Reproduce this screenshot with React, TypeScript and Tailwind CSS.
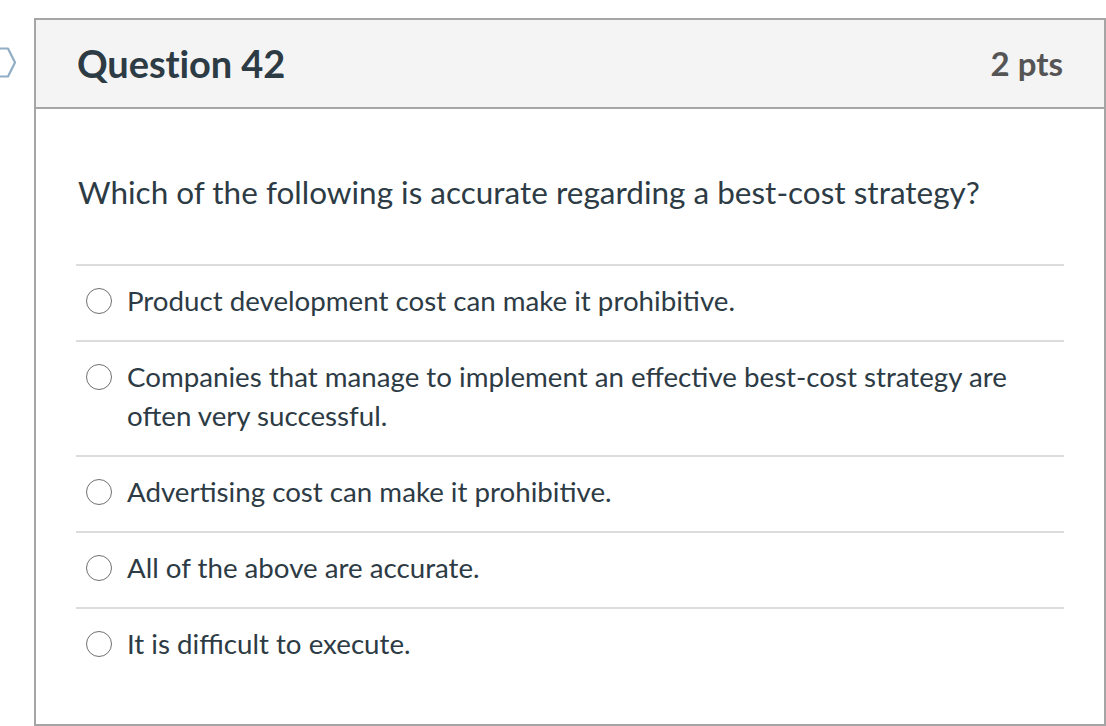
import React from "react";

const options = [
  "Product development cost can make it prohibitive.",
  "Companies that manage to implement an effective best-cost strategy are often very successful.",
  "Advertising cost can make it prohibitive.",
  "All of the above are accurate.",
  "It is difficult to execute.",
];

export default function App() {
  return (
    <div className="relative w-[1106px] h-[726px] bg-white overflow-hidden" style={{ fontFamily: "Lato, 'Noto Sans', sans-serif" }}>
      <svg className="absolute left-0 top-[46px]" width="20" height="34" viewBox="0 0 20 34">
        <path d="M-4 2.5 H8 L15 16.5 L8 30.5 H-4" fill="none" stroke="#8fadc4" strokeWidth="2.2" strokeLinejoin="round" />
      </svg>
      <div className="ml-[34px] mt-[18px] w-[1072px] h-[708px] border-2 border-[#a5a5a5] flex flex-col">
        <div className="h-[89px] bg-[#f4f4f4] border-b-2 border-[#a5a5a5] flex items-center justify-between pl-[41px] pr-[41px] shrink-0">
          <span className="text-[38px] font-bold text-[#2d3b45] tracking-[-0.1px]">Question 42</span>
          <span className="text-[33px] font-bold text-[#555555]">2 pts</span>
        </div>
        <div className="px-[40px] pt-[61px]">
          <p className="text-[31.5px] leading-[44px] text-[#2d3b45] pl-[2px] mb-[50px]">Which of the following is accurate regarding a best-cost strategy?</p>
          {options.map((o, i) => (
            <div key={i} className="border-t-2 border-[#dcdcdc] flex items-start pl-[10px] pr-[40px] pt-[15px] pb-[20px]">
              <span className="mt-[7px] w-[26px] h-[26px] rounded-full border-[1.6px] border-[#707070] shrink-0" />
              <span className="ml-[15px] text-[27.7px] leading-[39px] text-[#2d3b45]">{o}</span>
            </div>
          ))}
        </div>
      </div>
    </div>
  );
}
